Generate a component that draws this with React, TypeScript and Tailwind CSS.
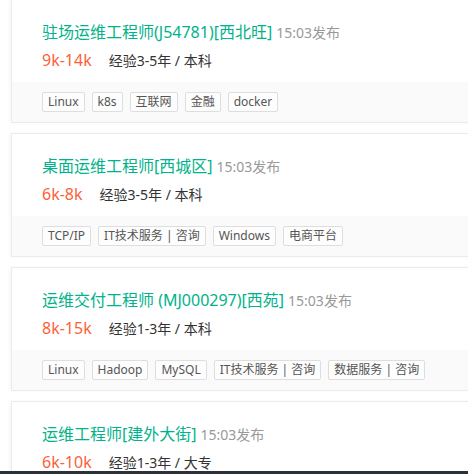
import React from "react";

type Job = {
  title: string;
  salary: string;
  exp: string;
  tags: string[];
};

const jobs: Job[] = [
  { title: "驻场运维工程师(J54781)[西北旺]", salary: "9k-14k", exp: "经验3-5年 / 本科", tags: ["Linux", "k8s", "互联网", "金融", "docker"] },
  { title: "桌面运维工程师[西城区]", salary: "6k-8k", exp: "经验3-5年 / 本科", tags: ["TCP/IP", "IT技术服务 | 咨询", "Windows", "电商平台"] },
  { title: "运维交付工程师 (MJ000297)[西苑]", salary: "8k-15k", exp: "经验1-3年 / 本科", tags: ["Linux", "Hadoop", "MySQL", "IT技术服务 | 咨询", "数据服务 | 咨询"] },
  { title: "运维工程师[建外大街]", salary: "6k-10k", exp: "经验1-3年 / 大专", tags: ["Linux", "运维", "互联网"] },
];

function Card({ job }: { job: Job }) {
  return (
    <div className="ml-[11px] w-[500px] shrink-0 border border-[#ebebeb] bg-white shadow-[-2px_0_4px_rgba(0,0,0,0.03)]">
      <div className="h-[82px] pl-[30px] pt-[20px]">
        <div className="flex items-baseline h-[24px] leading-[24px]">
          <span className="text-[16px] text-[#00b38a]">{job.title}</span>
          <span className="ml-[4px] text-[14px] text-[#999999]">15:03发布</span>
        </div>
        <div className="mt-[4px] flex items-baseline h-[24px] leading-[24px]">
          <span className="text-[16px] text-[#fd5f39]">{job.salary}</span>
          <span className="ml-[17px] text-[14px] text-[#333333]">{job.exp}</span>
        </div>
      </div>
      <div className="h-[40px] bg-[#fafafa] pl-[30px] pt-[10px] flex gap-[7px]">
        {job.tags.map((t) => (
          <span
            key={t}
            className="h-[20px] leading-[18px] px-[5px] border border-[#dedede] rounded-[2px] bg-[#fdfdfd] text-[12px] text-[#555555] whitespace-nowrap"
          >
            {t}
          </span>
        ))}
      </div>
    </div>
  );
}

export default function App() {
  return (
    <div
      className="w-[468px] h-[474px] overflow-hidden bg-white relative"
      style={{ fontFamily: '"Noto Sans", "Noto Sans CJK SC", sans-serif' }}
    >
      <div className="-mt-[1px] flex flex-col gap-[10px]">
        {jobs.map((j, i) => (
          <Card key={i} job={j} />
        ))}
      </div>
      <div className="fixed left-0 bottom-0 w-[468px] h-[3px] bg-[#2b3136]" />
    </div>
  );
}
